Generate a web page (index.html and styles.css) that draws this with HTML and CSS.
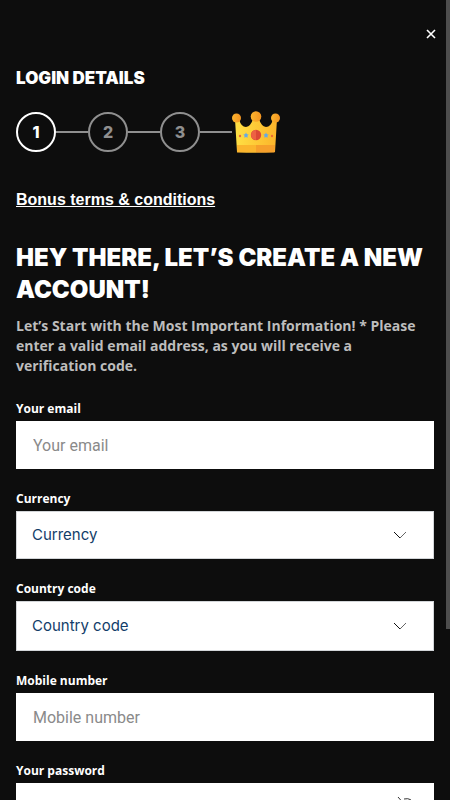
FILE: index.html
```html
<!DOCTYPE html>
<html lang="en">
<head>
<meta charset="utf-8">
<meta name="viewport" content="width=device-width, initial-scale=1">
<title>Create a new account</title>
<link rel="stylesheet" href="styles.css">
</head>
<body>
<main class="panel">
  <div class="topbar">
    <button class="close" type="button" aria-label="Close">
      <svg width="10" height="10" viewBox="0 0 10 10"><path d="M1 1l8 8M9 1L1 9"/></svg>
    </button>
  </div>
  <h2 class="eyebrow">Login details</h2>
  <ol class="steps">
    <li class="step step-active">1</li>
    <li class="step">2</li>
    <li class="step">3</li>
    <li class="crown">
      <svg width="48" height="44" viewBox="0 0 48 44" aria-hidden="true">
        <defs>
          <linearGradient id="gold" x1="0" x2="1">
            <stop offset="0" stop-color="#ffe044"/>
            <stop offset="1" stop-color="#fcb42a"/>
          </linearGradient>
          <linearGradient id="ball" x1="0" x2="1">
            <stop offset="0" stop-color="#fdb52e"/>
            <stop offset="1" stop-color="#f39421"/>
          </linearGradient>
        </defs>
        <path fill="url(#gold)" d="M3 9L5 42Q24 43 43 42L45 9H41Q39 17 34 17Q29 16 27 9H21Q19 16 14 17Q9 17 7 9Z"/>
        <path fill="#fbb52d" d="M5 35H24V42.500H5Z"/>
        <path fill="#f69f2b" d="M24 35H43L42.500 42.500H24Z"/>
        <g fill="url(#ball)"><circle cx="4.500" cy="8" r="4.500"/><circle cx="24" cy="6.500" r="5.300"/><circle cx="43.500" cy="8" r="4.500"/></g>
        <circle cx="24" cy="25" r="5.200" fill="#dc4835"/>
        <path fill="#ed6143" d="M19 25a5 5 0 0 1 5-5v10a5 5 0 0 1-5-5Z"/>
        <path id="gem" fill="#62a9e8" d="M14 22.500l.9 1.700 1.800.3-1.300 1.300.3 1.900-1.700-.8-1.700.8.3-1.900-1.300-1.300 1.800-.3Z"/>
        <use href="#gem" x="20"/>
        <g fill="#ee6a35"><circle cx="8" cy="26" r="1.200"/><circle cx="40" cy="26" r="1.200"/></g>
      </svg>
    </li>
  </ol>
  <a class="terms" href="#terms">Bonus terms &amp; conditions</a>
  <h1 class="title">Hey there, let’s create a new account!</h1>
  <p class="intro">Let’s Start with the Most Important Information! * Please enter a valid email address, as you will receive a verification code.</p>
  <form class="form">
    <div class="field">
      <label for="email">Your email</label>
      <input class="control" id="email" type="email" placeholder="Your email">
    </div>
    <div class="field">
      <label for="currency">Currency</label>
      <div class="control-wrap">
        <select class="control" id="currency"><option>Currency</option></select>
        <svg class="chevron" width="14" height="8" viewBox="0 0 14 8"><path class="dark" d="M1 1l6 6"/><path class="light" d="M7 7l6-6"/></svg>
      </div>
    </div>
    <div class="field">
      <label for="country">Country code</label>
      <div class="control-wrap">
        <select class="control control-tall" id="country"><option>Country code</option></select>
        <svg class="chevron" width="14" height="8" viewBox="0 0 14 8"><path class="dark" d="M1 1l6 6"/><path class="light" d="M7 7l6-6"/></svg>
      </div>
    </div>
    <div class="field">
      <label for="mobile">Mobile number</label>
      <input class="control" id="mobile" type="tel" placeholder="Mobile number">
    </div>
    <div class="field">
      <label for="password">Your password</label>
      <div class="control-wrap">
        <input class="control" id="password" type="password">
        <button class="reveal" type="button" aria-label="Show password">
          <svg width="20" height="20" viewBox="0 0 20 20"><path d="M2 1l15 17M8 3q8-2 11 7-1 2-3 4M5 6Q2 8 1 10q5 8 12 5"/></svg>
        </button>
      </div>
    </div>
  </form>
</main>
<div class="scroll-thumb" aria-hidden="true"></div>
</body>
</html>
```
FILE: styles.css
```css
* { box-sizing: border-box; }

body {
  margin: 0;
  height: 100vh;
  overflow: hidden;
  background: #0d0d0d;
  color: #fff;
  font-family: "Open Sans", sans-serif;
}

.panel {
  height: 100%;
  padding: 24px 16px;
  overflow: hidden;
}

.topbar {
  display: flex;
  justify-content: flex-end;
  margin-right: -7px;
}

.close {
  display: grid;
  place-items: center;
  width: 20px;
  height: 20px;
  margin: 0;
  padding: 0;
  border: 0;
  background: none;
}

.close path {
  stroke: #fff;
  stroke-width: 1.6;
}

.eyebrow {
  margin: 24px 0;
  font: 900 17px/20px Inter, sans-serif;
  text-transform: uppercase;
}

.steps {
  display: flex;
  align-items: center;
  height: 40px;
  margin: 0 0 36px;
  padding: 0;
  list-style: none;
}

.step {
  display: grid;
  place-items: center;
  width: 40px;
  height: 40px;
  border: 2px solid #8f8f8f;
  border-radius: 50%;
  color: #8f8f8f;
  font: 800 16px/20px Inter, sans-serif;
  margin-right: 32px;
  position: relative;
}

.step::after {
  content: "";
  position: absolute;
  left: 100%;
  width: 32px;
  margin-left: 2px;
  height: 2px;
  background: #8f8f8f;
}

.step-active {
  border-color: #fff;
  color: #fff;
}

.crown svg { display: block; }

.terms {
  display: block;
  width: fit-content;
  color: #fff;
  font: 700 16px/24px "Liberation Sans", sans-serif;
}

.title {
  margin: 30px 0 10px;
  font: 900 24px/32px Inter, sans-serif;
  text-transform: uppercase;
}

.intro {
  margin: 0 0 25px;
  color: #bdbdbd;
  font-size: 14px;
  font-weight: 700;
  line-height: 20px;
}

.form {
  display: flex;
  flex-direction: column;
  gap: 22px;
}

.field {
  display: flex;
  flex-direction: column;
  gap: 4px;
}

.field label {
  font-size: 12px;
  font-weight: 700;
  line-height: 16px;
}

.control {
  display: block;
  width: 100%;
  height: 48px;
  margin: 0;
  padding: 0 17px;
  border: 0;
  border-radius: 0;
  background: #fff;
  color: #123d69;
  font: 16px/24px Roboto, sans-serif;
}

.control::placeholder { color: #8a8a8a; }

select.control {
  appearance: none;
  padding: 0 15px;
  border: 1px solid #d2d5d8;
  font: 15px/24px Inter, sans-serif;
}

select.control-tall { height: 50px; }

.control-wrap {
  display: grid;
  align-items: center;
  position: relative;
}

.chevron {
  position: absolute;
  right: 27px;
  fill: none;
  pointer-events: none;
}

.dark { stroke: #111; }
.light { stroke: #666; }

.reveal {
  position: absolute;
  right: 12px;
  width: 32px;
  height: 24px;
  padding: 0;
  border: 0;
  background: none;
}

.reveal path {
  fill: none;
  stroke: #333;
}

.scroll-thumb {
  position: fixed;
  top: 0;
  right: 0;
  width: 4px;
  height: 78.6%;
  background: #4d4d4d;
}
```
